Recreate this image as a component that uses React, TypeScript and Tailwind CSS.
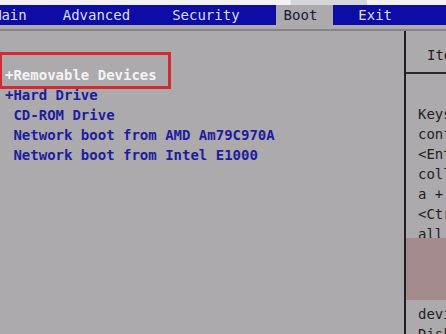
import React from 'react';

const bootItems = [
  '+Removable Devices',
  '+Hard Drive',
  ' CD-ROM Drive',
  ' Network boot from AMD Am79C970A',
  ' Network boot from Intel E1000',
];

const helpLines = [
  'Keys used to view or',
  'configure devices:',
  '<Enter> expands or',
  'collapses devices with',
  'a + or -',
  '<Ctrl+Enter> expands',
  'all',
  '<+> and <-> moves the',
  'device up or down.',
  '<n> May move removable',
  'device between Hard',
  'Disk or Removable',
];

export default function App() {
  return (
    <div
      className="w-[446px] h-[334px] overflow-hidden bg-[#acaaac] flex flex-col text-[14px]"
      style={{ fontFamily: '"DejaVu Sans Mono", "Liberation Mono", monospace' }}
    >
      {/* strip above the menu bar */}
      <div className="flex h-[5px] shrink-0">
        <div className="w-[290px] bg-[#f2f2f2]" />
        <div className="w-[77px] bg-[#d6d6d8] border-l border-[#e8e8e8]" />
        <div className="flex-1 bg-[#f2f2f2]" />
      </div>

      {/* menu bar */}
      <div className="h-[24px] shrink-0">
        <div className="h-[20px] bg-[#0d0da6] flex items-start text-[#dcdcf2] leading-[20px] whitespace-pre">
          <span className="ml-[-7px]">Main</span>
          <span className="ml-[36px]">Advanced</span>
          <span className="ml-[42px]">Security</span>
          <span className="ml-[36px] h-[24px] bg-[#acaaac] pl-[8px] pr-[16px] text-[#1b1b3a]">Boot</span>
          <span className="ml-[25px]">Exit</span>
        </div>
      </div>
      <div className="h-[2px] shrink-0 bg-[#858386]" />

      {/* body */}
      <div className="flex flex-1 min-h-0">
        <div className="w-[404px] relative pt-[34px] shrink-0">
          {bootItems.map((item, i) => (
            <div
              key={item}
              className={
                'h-[20px] leading-[20px] pl-[5px] whitespace-pre font-bold ' +
                (i === 0 ? 'text-[#f4f4f4]' : 'text-[#1d1d9e]')
              }
            >
              {item}
            </div>
          ))}
          {/* highlight frame */}
          <div className="absolute left-[-1px] top-[21px] w-[172px] h-[37px] border-[3px] border-[#d22a30]" />
        </div>

        <div className="flex-1 border-l-2 border-[#1e1e1e] relative overflow-hidden text-[#1e1e1e]">
          <div className="h-[43px] border-b-2 border-[#2a2a2a] pt-[14px] pl-[21px] leading-[20px] whitespace-pre">
            Item Specific Help
          </div>
          <div className="pt-[30px] pl-[12px]">
            {helpLines.map((line) => (
              <div key={line} className="h-[20px] leading-[20px] whitespace-pre">
                {line}
              </div>
            ))}
          </div>
          <div className="absolute left-0 right-0 top-[207px] h-[62px] bg-[#a48b8d]" />
        </div>
      </div>
    </div>
  );
}
